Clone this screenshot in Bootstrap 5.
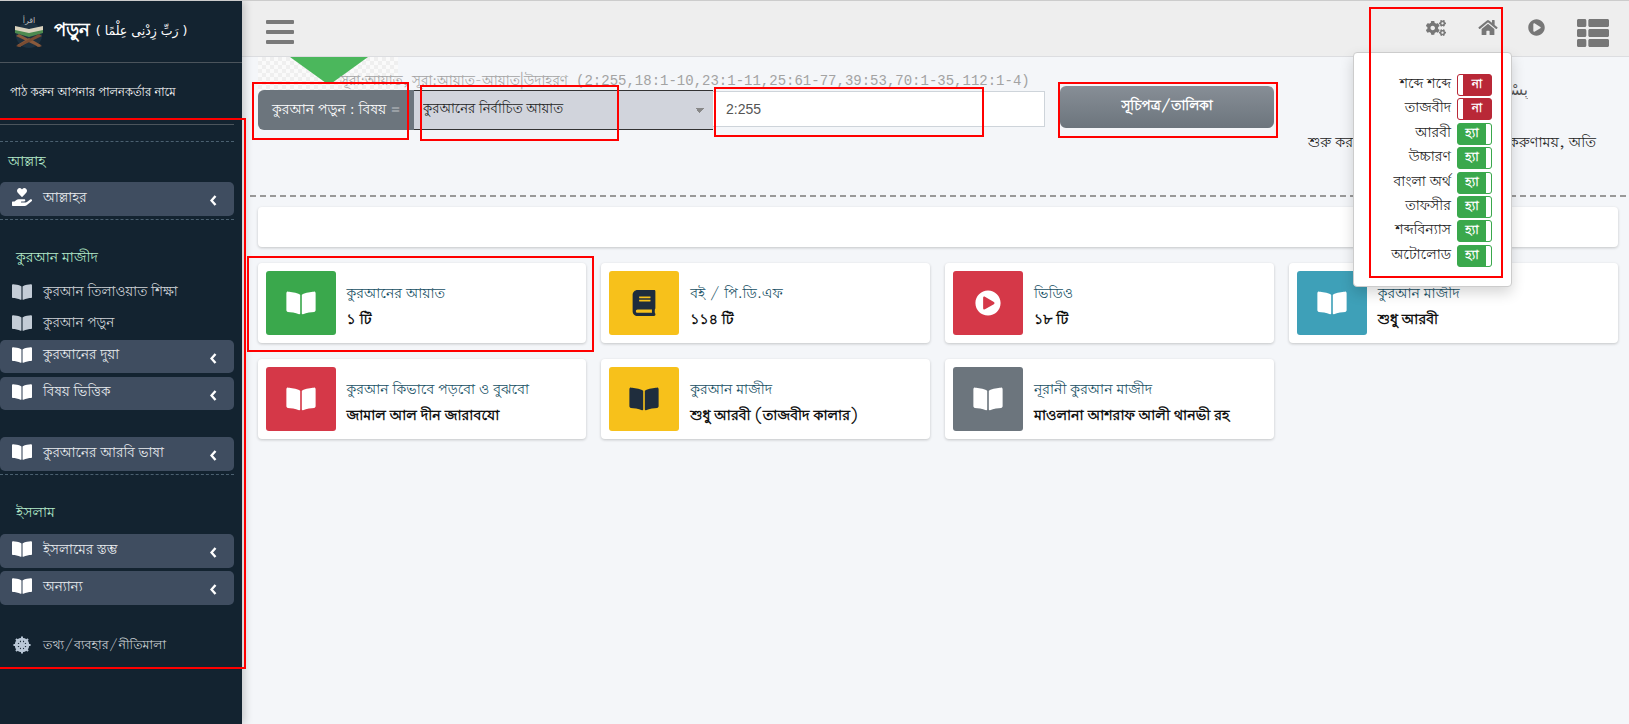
<!DOCTYPE html>
<html lang="bn">
<head>
<meta charset="utf-8">
<title>পড়ুন</title>
<link href="https://cdn.jsdelivr.net/npm/bootstrap@5.3.0/dist/css/bootstrap.min.css" rel="stylesheet">
<style>
html,body{height:724px;overflow:hidden}
body{background:#f4f6f9;font-family:"Lohit Bengali","Noto Sans Bengali","Noto Serif Bengali","FreeSerif","Liberation Serif",serif;font-size:14px;color:#111;border-top:1px solid #ccc;position:relative;width:1629px}
.shell{height:723px}
.side{width:242px;flex:none;background:#132330;color:#e3e7ea;height:723px;box-shadow:3px 0 8px rgba(0,0,0,.18);position:relative;z-index:2}
.brand{height:62px;border-bottom:1px solid #4b545c;padding-left:13px;color:#fff}
.brand-name{font-size:18px;font-weight:700;margin-left:8px}
.brand-ar{font-family:"DejaVu Sans",sans-serif;font-size:12.5px;margin-left:6px}
.side-body{padding-right:8px}
.tagline{height:62px;border-bottom:1px solid #4b545c;padding-left:10px;font-size:11.5px;color:#fff}
.dash{border-top:1px dashed #4b6070;height:0}
.dash-a{margin-top:16px}.dash-b{margin-top:3px}
.sec{color:#b5eccb;font-size:14px;display:flex;align-items:center}
.sec-a{height:40px;padding-left:8px}
.sec-b{height:22px;padding:1px 0 0 16px;margin-top:27px}
.sec-c{height:22px;padding:1px 0 0 16px;margin-top:27px}
.sitem{height:34px;background:#3f4d60;border-radius:5px;display:flex;align-items:center;padding:0 0 0 12px;color:#e9ecef;font-size:13.5px}
.sitem-s{height:33px}
.sitem .ico{margin-top:-4px;fill:#fff}
.slink{height:31px;display:flex;align-items:center;padding:3px 0 0 12px;color:#d0d4d8;font-size:13.5px}
.slink .ico{margin-top:-3px}
.slink-f{font-size:12.5px}
.ico{width:20px;height:18px;fill:currentColor;margin-right:11px;flex:none}
.slink .ico{fill:#c3ccd6}
.chev{width:7px;height:11px;margin-left:auto;margin-right:17px;margin-top:3px;flex:none}
.mt-l1{margin-top:7px}.mt-i1{margin-top:2px}.mt-i2{margin-top:4px}.mt-i3{margin-top:27px}.mt-i4{margin-top:10px}.mt-i5{margin-top:3px}.mt-l2{margin-top:24px}
.main-col{flex:1;min-width:0;position:relative}
.topbar{height:56px;background:#eee;border-bottom:1px solid #dcdde0;padding:0 20px 0 24px}
.burger{width:28px;height:24px;display:flex;flex-direction:column;justify-content:space-between;margin-top:6px}
.burger span{display:block;height:4px;background:#7a7a7a;border-radius:1px}
.tb-icon{fill:#777;flex:none}
.tb-gear{width:20px;height:16px;margin-right:32px}
.tb-home{width:20px;height:17px;margin-right:30px}
.tb-play{width:17px;height:17px;margin-right:32px}
.tb-list{width:32px;height:32px;margin-top:8px}
.tb-up{margin-top:-2px}
.content{padding:0 3px 0 8px}
.tools{height:140px;border-bottom:2px dashed #999;padding-left:8px;position:relative}
.checker{position:absolute;left:8px;top:0;width:140px;height:34px;background:repeating-conic-gradient(#efefef 0 25%,#fafafa 0 50%) 0 0/8px 8px;overflow:hidden}
.checker svg{position:absolute;left:32px;top:0;width:78px;height:28px;fill:#4bb75c}
.col-q{width:787px;flex:none;position:relative}
.hint{height:33px;padding-left:82px;display:flex;align-items:flex-end;font-family:"Liberation Mono","Lohit Bengali","Noto Sans Bengali",monospace;font-size:14px;line-height:17px;color:#a3a3a3;white-space:nowrap;position:relative}
.hint-bn{font-size:13.5px;font-family:"Lohit Bengali","Noto Sans Bengali",serif;margin-right:8px}
.qgroup{height:40px;flex-wrap:nowrap}
.qlabel{width:157px;background:#6c757d;color:#fff;border:0;font-size:14px;padding:0 0 0 14px;border-radius:6px 0 0 6px}
.qgroup .qselect{width:299px;flex:none;background-color:#d1d4dc;border:0;border-top:1px solid #333;border-bottom:1px solid #333;border-radius:0;font-size:13.2px;color:#222;padding:0 0 0 9px;background-image:linear-gradient(45deg,transparent 50%,#888 50%),linear-gradient(-45deg,transparent 50%,#888 50%);background-size:5px 5px,5px 5px;background-position:right 13px center,right 8px center;font-family:inherit}
.qinput{height:36px;margin-top:1px;border:1px solid #ced4da;border-radius:0;font-family:"Liberation Sans",sans-serif;font-size:14px;color:#555;padding:0 13px}
.qinput:focus{box-shadow:none}
.qbtn{width:214px;height:42px;margin:29px 0 0 15px;background:linear-gradient(#878e96,#6c757d);border:0;border-radius:6px;color:#fff;font-size:13.5px;font-weight:700;flex:none}
.col-r{width:262px;margin-left:34px;flex:none;text-align:center}
.r-ar{font-family:"DejaVu Sans",sans-serif;font-size:15px;direction:rtl;text-align:right;margin:22px 42px 0 0;height:20px;color:#555;white-space:nowrap;overflow:hidden}
.r-bn{margin-top:34px;font-size:14.3px;white-space:nowrap;line-height:20px;color:#222}
.blank{height:40px;margin:10px 0 0 8px;width:1360px;background:#fff;border-radius:4px;box-shadow:0 1px 3px rgba(0,0,0,.2)}
.boxes{--bs-gutter-x:15px;--bs-gutter-y:16px;width:1375px;margin-left:0}
.ibox{height:80px;background:#fff;border-radius:4px;box-shadow:0 1px 3px rgba(0,0,0,.2);padding:8px}
.iicon{width:70px;height:64px;border-radius:3px;flex:none;display:flex;align-items:center;justify-content:center}
.iicon svg{width:30px;height:26px;fill:#fff}
.i-green{background:#3aa84c}.i-yellow{background:#f7c11b}.i-red{background:#d53848}.i-cyan{background:#3ea0b8}.i-gray{background:#6c757d}
.i-yellow svg{fill:#1f2d3d}
.itext{padding:7px 0 0 11px;white-space:nowrap}
.ititle{color:#174f64;font-size:14px;line-height:20px}
.isub{font-weight:700;font-size:14.2px;color:#111;line-height:20px;margin-top:6px}
.popup{position:absolute;left:1111px;top:51px;width:159px;height:235px;background:#fff;border:1px solid #ccc;border-radius:4px;box-shadow:0 6px 14px rgba(0,0,0,.16);z-index:3;padding:21px 19px 0 0}
.opt{height:24.4px;display:flex;justify-content:flex-end;align-items:flex-start}
.opt-l{font-size:14px;line-height:20px;margin-right:6px;color:#222}
.tgl{width:35px;height:22px;border-radius:3px;display:flex;align-items:center;color:#fff;font-size:12px;font-weight:700;overflow:hidden;border:1px solid transparent}
.tgl i{display:block;width:5px;height:20px;background:#fff;flex:none}
.tgl b{flex:1;text-align:center}
.t-no{background:#b92837;border-color:#b92837}
.t-yes{background:#3aa84c;border-color:#3aa84c}
.rbox{position:absolute;border:2px solid #f00;z-index:5;pointer-events:none}
.r1{left:-6px;top:117px;width:252px;height:551px}
.r2{left:252px;top:81px;width:157px;height:58px}
.r3{left:420px;top:84px;width:199px;height:56px}
.r4{left:714px;top:86px;width:270px;height:50px}
.r5{left:1058px;top:81px;width:220px;height:56px}
.r6{left:247px;top:255px;width:347px;height:96px}
.r7{left:1369px;top:6px;width:134px;height:271px}
</style>
</head>
<body>
<div class="shell d-flex">
  <aside class="side">
    <div class="brand d-flex align-items-center">
      <svg width="33" height="33" viewBox="0 0 33 33" aria-hidden="true"><circle cx="16" cy="20" r="13" fill="#1d3140"/><text x="16" y="8" font-size="8" fill="#bbb" text-anchor="middle" font-family="DejaVu Sans">اقرأ</text><path d="M2 18 16 22 30 18 30 14 16 17 2 14Z" fill="#4d8a4f"/><path d="M2 15 16 18 30 15 30 11 16 14 2 11Z" fill="#d9d2bd"/><path d="M4 30 16 23 28 30 25 32 16 26 7 32ZM3 21 6 19 29 31 26 32Z" fill="#8a5a3c"/><path d="M29 21 26 19 3 31 6 32Z" fill="#7a4d33"/></svg>
      <span class="brand-name">পড়ুন</span><span class="brand-ar">( رَبِّ زِدْنِى عِلْمًا )</span>
    </div>
    <div class="side-body">
      <div class="tagline d-flex align-items-center">পাঠ করুন আপনার পালনকর্তার নামে</div>
      <div class="dash dash-a"></div>
      <div class="sec sec-a">আল্লাহ</div>
      <div class="sitem"><svg class="ico" viewBox="0 0 576 512"><path d="M275.3 250.5c7 7.4 18.4 7.4 25.5 0l108.9-114.2c31.6-33.2 29.8-88.2-5.6-118.8-30.8-26.7-76.7-21.9-104.9 7.7L288 36.9l-11.1-11.6C248.7-4.4 202.8-9.2 172 17.5c-35.3 30.6-37.2 85.6-5.6 118.8l108.9 114.2zm290 77.6c-11.8-10.7-30.2-10-42.6 0L430.3 402c-11.3 9.1-25.4 14-40 14H272c-8.8 0-16-7.2-16-16s7.2-16 16-16h78.3c15.9 0 30.7-10.9 33.3-26.6 3.3-20-12.1-37.4-31.6-37.4H192c-27 0-53.1 9.3-74.1 26.3L71.4 384H16c-8.8 0-16 7.2-16 16v96c0 8.8 7.2 16 16 16h356.8c14.5 0 28.6-5 40-14l151.2-121c15.2-12.1 16.4-35.3 1.3-48.9z"/></svg>আল্লাহর<svg class="chev" viewBox="0 0 7 11"><path d="M5.5 1 1.5 5.5 5.5 10" fill="none" stroke="#fff" stroke-width="2.4"/></svg></div>
      <div class="dash dash-b"></div>
      <div class="sec sec-b">কুরআন মাজীদ</div>
      <div class="slink mt-l1"><svg class="ico" viewBox="0 0 576 512"><use href="#bo"/></svg>কুরআন তিলাওয়াত শিক্ষা</div>
      <div class="slink"><svg class="ico" viewBox="0 0 576 512"><use href="#bo"/></svg>কুরআন পড়ুন</div>
      <div class="sitem sitem-s mt-i1"><svg class="ico" viewBox="0 0 576 512"><use href="#bo"/></svg>কুরআনের দুয়া<svg class="chev" viewBox="0 0 7 11"><path d="M5.5 1 1.5 5.5 5.5 10" fill="none" stroke="#fff" stroke-width="2.4"/></svg></div>
      <div class="sitem sitem-s mt-i2"><svg class="ico" viewBox="0 0 576 512"><use href="#bo"/></svg>বিষয় ভিত্তিক<svg class="chev" viewBox="0 0 7 11"><path d="M5.5 1 1.5 5.5 5.5 10" fill="none" stroke="#fff" stroke-width="2.4"/></svg></div>
      <div class="sitem mt-i3"><svg class="ico" viewBox="0 0 576 512"><use href="#bo"/></svg>কুরআনের আরবি ভাষা<svg class="chev" viewBox="0 0 7 11"><path d="M5.5 1 1.5 5.5 5.5 10" fill="none" stroke="#fff" stroke-width="2.4"/></svg></div>
      <div class="dash dash-b"></div>
      <div class="sec sec-c">ইসলাম</div>
      <div class="sitem mt-i4"><svg class="ico" viewBox="0 0 576 512"><use href="#bo"/></svg>ইসলামের স্তম্ভ<svg class="chev" viewBox="0 0 7 11"><path d="M5.5 1 1.5 5.5 5.5 10" fill="none" stroke="#fff" stroke-width="2.4"/></svg></div>
      <div class="sitem mt-i5"><svg class="ico" viewBox="0 0 576 512"><use href="#bo"/></svg>অন্যান্য<svg class="chev" viewBox="0 0 7 11"><path d="M5.5 1 1.5 5.5 5.5 10" fill="none" stroke="#fff" stroke-width="2.4"/></svg></div>
      <div class="slink slink-f mt-l2"><svg class="ico" viewBox="0 0 20 20"><g fill="none" stroke="#b9c7d6"><circle cx="10" cy="10" r="6.5" stroke-width="3.2"/><circle cx="10" cy="10" r="2" stroke-width="1.8"/><path d="M10 .5v19M.5 10h19M3.3 3.3l13.4 13.4M16.7 3.3 3.3 16.7" stroke-width="2.2"/></g></svg>তথ্য/ব্যবহার/নীতিমালা</div>
    </div>
  </aside>

  <div class="main-col">
    <nav class="topbar d-flex align-items-center">
      <div class="burger"><span></span><span></span><span></span></div>
      <div class="ms-auto d-flex align-items-center">
        <svg class="tb-icon tb-gear tb-up" viewBox="0 0 640 512"><path d="M512.1 191l-8.2 14.3c-3 5.3-9.4 7.5-15.1 5.4-11.8-4.4-22.6-10.7-32.1-18.6-4.6-3.8-5.8-10.5-2.8-15.7l8.2-14.3c-6.9-8-12.3-17.3-15.9-27.4h-16.5c-6 0-11.2-4.3-12.2-10.3-2-12-2.1-24.6 0-37.1 1-6 6.2-10.4 12.2-10.4h16.5c3.6-10.1 9-19.4 15.9-27.4l-8.2-14.3c-3-5.2-1.9-11.9 2.8-15.7 9.5-7.9 20.4-14.2 32.1-18.6 5.7-2.1 12.1.1 15.1 5.4l8.2 14.3c10.5-1.9 21.2-1.9 31.7 0L552 6.3c3-5.3 9.4-7.5 15.1-5.4 11.8 4.4 22.6 10.7 32.1 18.6 4.6 3.8 5.8 10.5 2.8 15.7l-8.2 14.3c6.9 8 12.3 17.3 15.9 27.4h16.5c6 0 11.2 4.3 12.2 10.3 2 12 2.1 24.6 0 37.1-1 6-6.2 10.4-12.2 10.4h-16.5c-3.6 10.1-9 19.4-15.9 27.4l8.2 14.3c3 5.2 1.9 11.9-2.8 15.7-9.5 7.9-20.4 14.2-32.1 18.6-5.7 2.1-12.1-.1-15.1-5.4l-8.2-14.3c-10.4 1.9-21.2 1.9-31.7 0zm-10.5-58.8c38.5 29.6 82.4-14.3 52.8-52.8-38.5-29.7-82.4 14.3-52.8 52.8zM386.3 286.1l33.7 16.8c10.1 5.8 14.5 18.1 10.5 29.1-8.9 24.2-26.4 46.4-42.6 65.8-7.4 8.9-20.2 11.1-30.3 5.3l-29.1-16.8c-16 13.7-34.6 24.6-54.9 31.7v33.6c0 11.6-8.3 21.6-19.7 23.6-24.6 4.2-50.4 4.4-75.9 0-11.5-2-20-11.9-20-23.6V418c-20.3-7.2-38.9-18-54.9-31.7L74 403c-10 5.8-22.9 3.6-30.3-5.3-16.2-19.4-33.3-41.6-42.2-65.7-4-10.9.4-23.2 10.5-29.1l33.3-16.8c-3.9-20.9-3.9-42.4 0-63.4L12 205.8c-10.1-5.8-14.6-18.1-10.5-29 8.9-24.2 26-46.4 42.2-65.8 7.4-8.9 20.2-11.1 30.3-5.3l29.1 16.8c16-13.7 34.6-24.6 54.9-31.7V57.1c0-11.5 8.2-21.5 19.6-23.5 24.6-4.2 50.5-4.4 76-.1 11.5 2 20 11.9 20 23.6v33.6c20.3 7.2 38.9 18 54.9 31.7l29.1-16.8c10-5.8 22.9-3.6 30.3 5.3 16.2 19.4 33.2 41.6 42.1 65.8 4 10.9.1 23.2-10 29.1l-33.7 16.8c3.9 21 3.9 42.5 0 63.5zm-117.6 21.1c59.2-77-28.7-164.9-105.7-105.7-59.2 77 28.7 164.9 105.7 105.7zm243.4 182.7l-8.2 14.3c-3 5.3-9.4 7.5-15.1 5.4-11.8-4.4-22.6-10.7-32.1-18.6-4.6-3.8-5.8-10.5-2.8-15.7l8.2-14.3c-6.9-8-12.3-17.3-15.9-27.4h-16.5c-6 0-11.2-4.3-12.2-10.3-2-12-2.1-24.6 0-37.1 1-6 6.2-10.4 12.2-10.4h16.5c3.6-10.1 9-19.4 15.9-27.4l-8.2-14.3c-3-5.2-1.9-11.9 2.8-15.7 9.5-7.9 20.4-14.2 32.1-18.6 5.7-2.1 12.1.1 15.1 5.4l8.2 14.3c10.5-1.9 21.2-1.9 31.7 0l8.2-14.3c3-5.3 9.4-7.5 15.1-5.4 11.8 4.4 22.6 10.7 32.1 18.6 4.6 3.8 5.8 10.5 2.8 15.7l-8.2 14.3c6.9 8 12.3 17.3 15.9 27.4h16.5c6 0 11.2 4.3 12.2 10.3 2 12 2.1 24.6 0 37.1-1 6-6.2 10.4-12.2 10.4h-16.5c-3.6 10.1-9 19.4-15.9 27.4l8.2 14.3c3 5.2 1.9 11.9-2.8 15.7-9.5 7.9-20.4 14.2-32.1 18.6-5.7 2.1-12.1-.1-15.1-5.4l-8.2-14.3c-10.4 1.9-21.2 1.9-31.7 0zM501.6 431c38.5 29.6 82.4-14.3 52.8-52.8-38.5-29.6-82.4 14.3-52.8 52.8z"/></svg>
        <svg class="tb-icon tb-home tb-up" viewBox="0 0 576 512"><path d="M280.37 148.26L96 300.11V464a16 16 0 0 0 16 16l112.06-.29a16 16 0 0 0 15.92-16V368a16 16 0 0 1 16-16h64a16 16 0 0 1 16 16v95.64a16 16 0 0 0 16 16.05L464 480a16 16 0 0 0 16-16V300L295.67 148.26a12.19 12.19 0 0 0-15.3 0zM571.6 251.47L488 182.56V44.05a12 12 0 0 0-12-12h-56a12 12 0 0 0-12 12v72.61L318.47 43a48 48 0 0 0-61 0L4.34 251.47a12 12 0 0 0-1.6 16.9l25.5 31A12 12 0 0 0 45.15 301l235.22-193.74a12.19 12.19 0 0 1 15.3 0L530.9 301a12 12 0 0 0 16.9-1.6l25.5-31a12 12 0 0 0-1.7-16.93z"/></svg>
        <svg class="tb-icon tb-play tb-up" viewBox="0 0 512 512"><path d="M256 8C119 8 8 119 8 256s111 248 248 248 248-111 248-248S393 8 256 8zm115.7 272l-176 101c-15.8 8.8-35.7-2.5-35.7-21V152c0-18.4 19.8-29.8 35.7-21l176 107c16.4 9.2 16.4 32.9 0 42z"/></svg>
        <svg class="tb-icon tb-list" viewBox="0 0 512 512"><path d="M149.333 216v80c0 13.255-10.745 24-24 24H24c-13.255 0-24-10.745-24-24v-80c0-13.255 10.745-24 24-24h101.333c13.255 0 24 10.745 24 24zM0 376v80c0 13.255 10.745 24 24 24h101.333c13.255 0 24-10.745 24-24v-80c0-13.255-10.745-24-24-24H24c-13.255 0-24 10.745-24 24zM125.333 32H24C10.745 32 0 42.745 0 56v80c0 13.255 10.745 24 24 24h101.333c13.255 0 24-10.745 24-24V56c0-13.255-10.745-24-24-24zm80 448H488c13.255 0 24-10.745 24-24v-80c0-13.255-10.745-24-24-24H205.333c-13.255 0-24 10.745-24 24v80c0 13.255 10.745 24 24 24zm-24-424v80c0 13.255 10.745 24 24 24H488c13.255 0 24-10.745 24-24V56c0-13.255-10.745-24-24-24H205.333c-13.255 0-24 10.745-24 24zm24 264H488c13.255 0 24-10.745 24-24v-80c0-13.255-10.745-24-24-24H205.333c-13.255 0-24 10.745-24 24v80c0 13.255 10.745 24 24 24z"/></svg>
      </div>
    </nav>

    <div class="content">
      <div class="tools d-flex align-items-start">
        <div class="checker"><svg viewBox="0 0 78 28"><path d="M0 0H78L42 26Q39 28 36 26Z"/></svg></div>
        <div class="col-q">
          <div class="hint"><span class="hint-bn">সূরা:আয়াত, সূরা:আয়াত-আয়াত|উদাহরণ</span>(2:255,18:1-10,23:1-11,25:61-77,39:53,70:1-35,112:1-4)</div>
          <div class="input-group qgroup">
            <span class="input-group-text qlabel">কুরআন পড়ুন : বিষয় =</span>
            <select class="form-select qselect"><option>কুরআনের নির্বাচিত আয়াত</option></select>
            <input class="form-control qinput" type="text" value="2:255">
          </div>
        </div>
        <button class="btn qbtn" type="button">সূচিপত্র/তালিকা</button>
        <div class="col-r">
          <div class="r-ar">بِسْمِ اللَّهِ الرَّحْمَٰنِ الرَّحِيمِ</div>
          <div class="r-bn">শুরু করছি আল্লাহর নামে যিনি পরম করুণাময়, অতি<br>দয়ালু</div>
        </div>
      </div>

      <div class="blank"></div>

      <div class="row boxes mt-0">
        <div class="col-3"><div class="ibox d-flex align-items-center"><div class="iicon i-green"><svg viewBox="0 0 576 512"><use href="#bo"/></svg></div><div class="itext"><div class="ititle">কুরআনের আয়াত</div><div class="isub">১ টি</div></div></div></div>
        <div class="col-3"><div class="ibox d-flex align-items-center"><div class="iicon i-yellow"><svg viewBox="0 0 448 512"><path d="M448 360V24c0-13.3-10.7-24-24-24H96C43 0 0 43 0 96v320c0 53 43 96 96 96h328c13.3 0 24-10.7 24-24v-16c0-7.5-3.5-14.3-8.9-18.7-4.2-15.4-4.2-59.3 0-74.7 5.4-4.3 8.9-11.1 8.9-18.6zM128 134c0-3.3 2.7-6 6-6h212c3.3 0 6 2.7 6 6v20c0 3.3-2.7 6-6 6H134c-3.3 0-6-2.7-6-6v-20zm0 64c0-3.3 2.7-6 6-6h212c3.3 0 6 2.7 6 6v20c0 3.3-2.7 6-6 6H134c-3.3 0-6-2.7-6-6v-20zm253.4 250H96c-17.7 0-32-14.3-32-32 0-17.6 14.4-32 32-32h285.4c-1.9 17.1-1.9 46.9 0 64z"/></svg></div><div class="itext"><div class="ititle">বই / পি.ডি.এফ</div><div class="isub">১১৪ টি</div></div></div></div>
        <div class="col-3"><div class="ibox d-flex align-items-center"><div class="iicon i-red"><svg viewBox="0 0 512 512"><path d="M256 8C119 8 8 119 8 256s111 248 248 248 248-111 248-248S393 8 256 8zm115.7 272l-176 101c-15.8 8.8-35.7-2.5-35.7-21V152c0-18.4 19.8-29.8 35.7-21l176 107c16.4 9.2 16.4 32.9 0 42z"/></svg></div><div class="itext"><div class="ititle">ভিডিও</div><div class="isub">১৮ টি</div></div></div></div>
        <div class="col-3"><div class="ibox d-flex align-items-center"><div class="iicon i-cyan"><svg viewBox="0 0 576 512"><use href="#bo"/></svg></div><div class="itext"><div class="ititle">কুরআন মাজীদ</div><div class="isub">শুধু আরবী</div></div></div></div>
        <div class="col-3"><div class="ibox d-flex align-items-center"><div class="iicon i-red"><svg viewBox="0 0 576 512"><use href="#bo"/></svg></div><div class="itext"><div class="ititle">কুরআন কিভাবে পড়বো ও বুঝবো</div><div class="isub">জামাল আল দীন জারাবযো</div></div></div></div>
        <div class="col-3"><div class="ibox d-flex align-items-center"><div class="iicon i-yellow"><svg viewBox="0 0 576 512"><use href="#bo"/></svg></div><div class="itext"><div class="ititle">কুরআন মাজীদ</div><div class="isub">শুধু আরবী (তাজবীদ কালার)</div></div></div></div>
        <div class="col-3"><div class="ibox d-flex align-items-center"><div class="iicon i-gray"><svg viewBox="0 0 576 512"><use href="#bo"/></svg></div><div class="itext"><div class="ititle">নূরানী কুরআন মাজীদ</div><div class="isub">মাওলানা আশরাফ আলী থানভী রহ</div></div></div></div>
      </div>
    </div>

    <div class="popup">
      <div class="opt"><span class="opt-l">শব্দে শব্দে</span><span class="tgl t-no"><i></i><b>না</b></span></div>
      <div class="opt"><span class="opt-l">তাজবীদ</span><span class="tgl t-no"><i></i><b>না</b></span></div>
      <div class="opt"><span class="opt-l">আরবী</span><span class="tgl t-yes"><b>হ্যা</b><i></i></span></div>
      <div class="opt"><span class="opt-l">উচ্চারণ</span><span class="tgl t-yes"><b>হ্যা</b><i></i></span></div>
      <div class="opt"><span class="opt-l">বাংলা অর্থ</span><span class="tgl t-yes"><b>হ্যা</b><i></i></span></div>
      <div class="opt"><span class="opt-l">তাফসীর</span><span class="tgl t-yes"><b>হ্যা</b><i></i></span></div>
      <div class="opt"><span class="opt-l">শব্দবিন্যাস</span><span class="tgl t-yes"><b>হ্যা</b><i></i></span></div>
      <div class="opt"><span class="opt-l">অটোলোড</span><span class="tgl t-yes"><b>হ্যা</b><i></i></span></div>
    </div>
  </div>
</div>

<svg width="0" height="0" class="d-block" aria-hidden="true"><defs><path id="bo" d="M542.22 32.05c-54.8 3.11-163.72 14.43-230.96 55.59-4.64 2.84-7.27 7.89-7.27 13.17v363.87c0 11.55 12.63 18.85 23.28 13.49 69.18-34.82 169.23-44.32 218.7-46.92 16.89-.89 30.02-14.43 30.02-30.66V62.75c.01-17.71-15.35-31.74-33.77-30.7zM264.73 87.64C197.5 46.48 88.58 35.17 33.78 32.05 15.36 31.01 0 45.04 0 62.75V400.6c0 16.24 13.13 29.78 30.02 30.66 49.49 2.6 149.59 12.11 218.77 46.95 10.62 5.35 23.21-1.94 23.21-13.46V100.63c0-5.29-2.62-10.14-7.27-12.99z"/></defs></svg>

<div class="rbox r1"></div><div class="rbox r2"></div><div class="rbox r3"></div><div class="rbox r4"></div><div class="rbox r5"></div><div class="rbox r6"></div><div class="rbox r7"></div>
<script src="https://cdn.jsdelivr.net/npm/bootstrap@5.3.0/dist/js/bootstrap.bundle.min.js"></script>
</body>
</html>
